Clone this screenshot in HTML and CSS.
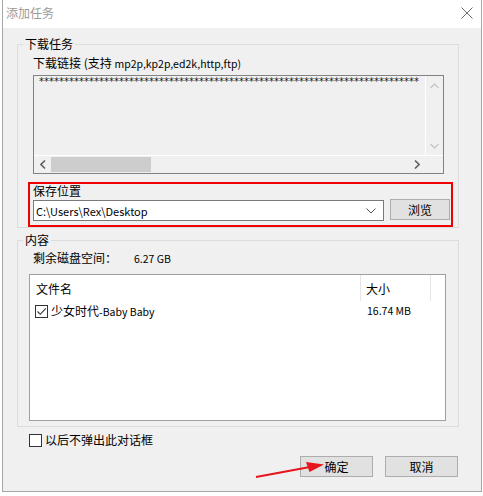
FILE: index.html
```html
<!DOCTYPE html>
<html lang="zh-CN">
<head>
<meta charset="utf-8">
<title>添加任务</title>
<link rel="stylesheet" href="styles.css">
</head>
<body>
<div class="window">
  <div class="titlebar">
    <span class="title">添加任务</span>
    <svg class="close" width="12" height="12" viewBox="0 0 12 12"><path d="M0.5 0.5 L11.5 11.5 M11.5 0.5 L0.5 11.5" stroke="#6d6d6d" stroke-width="1" fill="none"/></svg>
  </div>
  <div class="client">
    <fieldset class="group group-task">
      <legend>下载任务</legend>
      <div class="group-body task-body">
        <div class="label link-label">下载链接 (支持 <span class="lat">mp2p,kp2p,ed2k,http,ftp)</span></div>
        <div class="edit">
          <div class="edit-text">****************************************************************************</div>
          <div class="vscroll">
            <svg width="9" height="6" viewBox="0 0 9 6"><path d="M0.5 5 L4.5 1 L8.5 5" stroke="#c6c6c6" stroke-width="1.4" fill="none"/></svg>
            <svg width="9" height="6" viewBox="0 0 9 6"><path d="M0.5 1 L4.5 5 L8.5 1" stroke="#c6c6c6" stroke-width="1.4" fill="none"/></svg>
          </div>
          <div class="hscroll">
            <svg class="arr" width="6" height="9" viewBox="0 0 6 9"><path d="M5 0.5 L1 4.5 L5 8.5" stroke="#606060" stroke-width="1.6" fill="none"/></svg>
            <div class="track"><div class="thumb"></div></div>
            <svg class="arr" width="6" height="9" viewBox="0 0 6 9"><path d="M1 0.5 L5 4.5 L1 8.5" stroke="#606060" stroke-width="1.6" fill="none"/></svg>
          </div>
          <div class="corner"></div>
        </div>
        <div class="highlight">
          <div class="label save-label">保存位置</div>
          <div class="save-row">
            <div class="combo">
              <span class="combo-text lat">C:\Users\Rex\Desktop</span>
              <svg width="10" height="6" viewBox="0 0 10 6"><path d="M0.5 0.5 L5 5 L9.5 0.5" stroke="#555" stroke-width="1" fill="none"/></svg>
            </div>
            <button class="btn browse">浏览</button>
          </div>
        </div>
      </div>
    </fieldset>

    <fieldset class="group group-content">
      <legend>内容</legend>
      <div class="group-body content-body">
        <div class="disk"><span class="disk-label">剩余磁盘空间：</span><span class="disk-value lat">6.27 GB</span></div>
        <div class="list">
          <div class="list-head">
            <div class="col-name">文件名</div>
            <div class="col-size">大小</div>
          </div>
          <div class="list-row">
            <div class="col-name"><span class="check"><svg width="11" height="11" viewBox="0 0 11 11"><path d="M1.5 5.5 L4.3 8.3 L9.8 2.3" stroke="#333" stroke-width="1.1" fill="none"/></svg></span><span class="fname">少女时代<span class="lat">-Baby Baby</span></span></div>
            <div class="col-size lat">16.74 MB</div>
          </div>
        </div>
      </div>
    </fieldset>

    <div class="noshow"><span class="check"></span><span>以后不弹出此对话框</span></div>

    <div class="buttons">
      <button class="btn">确定</button>
      <button class="btn">取消</button>
    </div>

    <svg class="arrow" width="80" height="24" viewBox="0 0 80 24"><path d="M2 19 L56 9" stroke="#e8141c" stroke-width="2" fill="none"/><path d="M70 6.5 L52 4 L55.5 14 Z" fill="#e8141c"/></svg>
  </div>
</div>
</body>
</html>
```

FILE: styles.css
```css
* { box-sizing: border-box; }
html, body { margin: 0; padding: 0; }
body {
  background: #ffffff;
  font-family: "Noto Sans CJK SC", sans-serif;
  font-size: 12px;
  line-height: 14px;
  color: #000;
  width: 483px;
  height: 496px;
  overflow: hidden;
}
.lat { font-size: 10.5px; }
.window {
  margin-left: 2px;
  width: 480px;
  height: 492px;
  border: 1px solid #a6a6a6;
  border-top: none;
  display: flex;
  flex-direction: column;
  background: #f0f0f0;
}
.titlebar {
  height: 28px;
  background: #ffffff;
  display: flex;
  align-items: center;
  justify-content: space-between;
  padding: 0 8px 0 3px;
}
.title { color: #9a9a9a; margin-top: -2px; }
.close { margin-top: -2px; }
.client {
  position: relative;
  flex: 1;
  padding: 9px 22px 0 14px;
  display: flex;
  flex-direction: column;
}
.group {
  margin: 0;
  padding: 0;
  border: 1px solid #dcdcdc;
  min-width: 0;
}
legend {
  margin-left: 5px;
  padding: 0 2px;
  line-height: 14px;
}
.group-task { height: 191px; }
.task-body { padding-left: 15px; }
.link-label { margin-top: 5px; }
.edit {
  margin-top: 4px;
  width: 411px;
  height: 99px;
  border: 1px solid #828282;
  background: #f0f0f0;
  display: grid;
  grid-template-columns: 1fr 17px;
  grid-template-rows: 1fr 17px;
}
.edit-text {
  overflow: hidden;
  white-space: nowrap;
  font-family: "DejaVu Sans", sans-serif;
  font-size: 10px;
  color: #1a1a1a;
  padding: 1px 0 0 5px;
  line-height: 10px;
  border-right: 1px solid #ffffff;
  border-bottom: 1px solid #ffffff;
}
.vscroll {
  display: flex;
  flex-direction: column;
  justify-content: space-between;
  align-items: center;
  padding: 7px 0 6px;
  border-bottom: 1px solid #ffffff;
}
.hscroll { display: flex; align-items: center; }
.hscroll .arr { flex: none; margin: 0 5px 0 6px; }
.hscroll .arr:last-child { margin: 0 6px 0 5px; }
.track { flex: 1; height: 100%; display: flex; align-items: stretch; }
.thumb { width: 100px; background: #cdcdcd; margin: 1px 0; }
.corner { background: #f0f0f0; }
.highlight {
  margin: 8px 0 0 -5px;
  width: 425px;
  height: 45px;
  border: 2px solid #f00000;
  padding: 0 1px 0 3px;
}
.save-row {
  display: flex;
  align-items: flex-start;
  margin-top: 1px;
}
.combo {
  width: 351px;
  height: 21px;
  background: #fff;
  border: 1px solid #7a7a7a;
  display: flex;
  align-items: center;
  justify-content: space-between;
  padding: 0 7px 0 2px;
  margin-top: 1px;
}
.combo-text { font-size: 11px; }
.btn {
  font-family: "Noto Sans CJK SC", sans-serif;
  font-size: 12px;
  background: #e1e1e1;
  border: 1px solid #adadad;
  border-radius: 0;
  padding: 0;
  color: #000;
  line-height: 14px;
}
.browse { width: 60px; height: 21px; margin-left: 6px; }
.group-content { margin-top: 5px; height: 194px; }
.content-body { padding-left: 11px; }
.disk { margin: 4px 0 0 4px; display: flex; align-items: baseline; }
.disk-label { width: 101px; }
.list {
  margin-top: 8px;
  width: 417px;
  height: 147px;
  background: #fff;
  border: 1px solid #a0a0a0;
}
.list-head, .list-row { display: flex; }
.list-head { height: 26px; }
.list-head .col-name { width: 331px; padding: 2px 0 0 6px; border-right: 1px solid #e5e5e5; display: flex; align-items: center; }
.list-head .col-size { width: 70px; padding: 2px 0 0 5px; border-right: 1px solid #e5e5e5; display: flex; align-items: center; }
.list-row { height: 20px; align-items: center; }
.list-row .col-name { width: 331px; padding-left: 5px; display: flex; align-items: center; gap: 3px; }
.list-row .col-size { padding-left: 6px; }
.check {
  display: inline-flex;
  width: 13px;
  height: 13px;
  border: 1px solid #333;
  background: #fff;
  align-items: center;
  justify-content: center;
}
.noshow { display: flex; align-items: center; gap: 3px; margin: 6px 0 0 12px; }
.buttons { display: flex; justify-content: flex-end; gap: 12px; margin-top: 9px; padding-right: 1px; }
.buttons .btn { width: 73px; height: 21px; }
.arrow { position: absolute; left: 251px; top: 430px; }
```
